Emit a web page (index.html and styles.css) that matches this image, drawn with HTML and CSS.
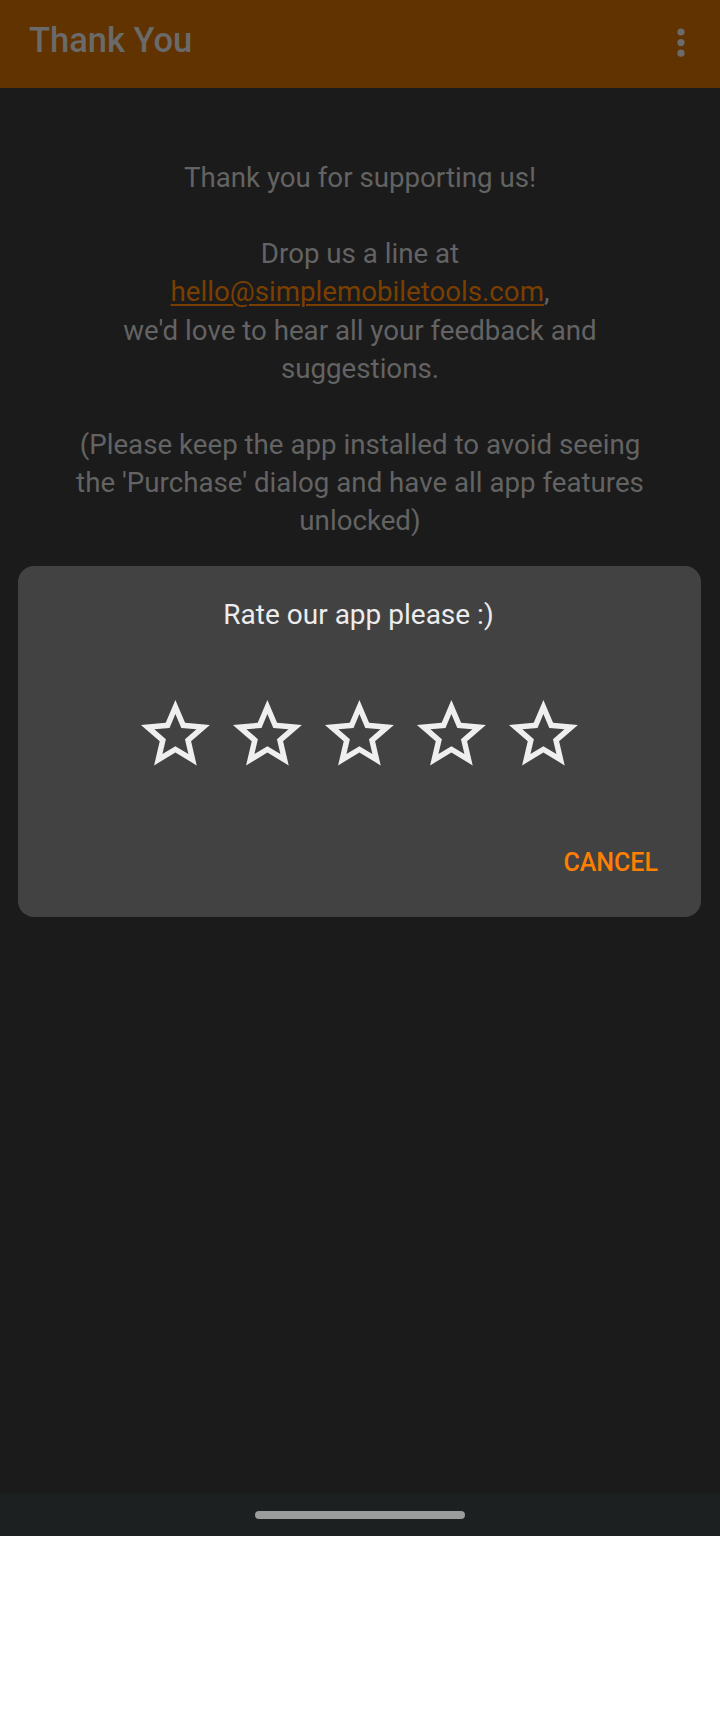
FILE: index.html
```html
<!DOCTYPE html>
<html lang="en">
<head>
<meta charset="utf-8">
<title>Thank You</title>
<link rel="stylesheet" href="styles.css">
</head>
<body>
<div class="screen">
  <header class="toolbar">
    <h1 class="toolbar-title">Thank You</h1>
    <span class="menu-btn" aria-label="More options">
      <svg width="8" height="30" viewBox="0 0 8 30"><circle cx="4" cy="4" r="3.6"/><circle cx="4" cy="14.6" r="3.6"/><circle cx="4" cy="25.2" r="3.6"/></svg>
    </span>
  </header>
  <main class="content">
    <p class="message">Thank you for supporting us!<br><br>Drop us a line at<br><a class="mail" href="#">hello@simplemobiletools.com</a>,<br>we'd love to hear all your feedback and<br>suggestions.<br><br>(Please keep the app installed to avoid seeing<br>the 'Purchase' dialog and have all app features<br>unlocked)</p>
    <div class="dialog">
      <div class="dialog-title">Rate our app please :)</div>
      <div class="stars">
        <svg class="star" viewBox="0 0 24 24"><path d="M22 9.24l-7.19-.62L12 2 9.19 8.630 2 9.24l5.46 4.73L5.82 21 12 17.27 18.18 21l-1.63-7.03L22 9.24zM12 15.4l-3.76 2.27 1-4.28-3.32-2.88 4.38-.38L12 6.1l1.71 4.04 4.38.38-3.32 2.88 1 4.28L12 15.4z"/></svg>
        <svg class="star" viewBox="0 0 24 24"><path d="M22 9.24l-7.19-.62L12 2 9.19 8.63 2 9.24l5.46 4.73L5.82 21 12 17.27 18.18 21l-1.63-7.03L22 9.24zM12 15.4l-3.76 2.27 1-4.28-3.32-2.88 4.38-.38L12 6.1l1.71 4.04 4.38.38-3.32 2.88 1 4.28L12 15.4z"/></svg>
        <svg class="star" viewBox="0 0 24 24"><path d="M22 9.24l-7.19-.62L12 2 9.19 8.63 2 9.24l5.46 4.73L5.82 21 12 17.27 18.18 21l-1.63-7.03L22 9.24zM12 15.4l-3.76 2.27 1-4.28-3.32-2.88 4.38-.38L12 6.1l1.71 4.04 4.38.38-3.32 2.88 1 4.28L12 15.4z"/></svg>
        <svg class="star" viewBox="0 0 24 24"><path d="M22 9.24l-7.19-.62L12 2 9.19 8.63 2 9.24l5.46 4.73L5.82 21 12 17.27 18.18 21l-1.63-7.03L22 9.24zM12 15.4l-3.76 2.27 1-4.28-3.32-2.88 4.38-.38L12 6.1l1.71 4.04 4.38.38-3.32 2.88 1 4.28L12 15.4z"/></svg>
        <svg class="star" viewBox="0 0 24 24"><path d="M22 9.24l-7.19-.62L12 2 9.19 8.63 2 9.24l5.46 4.73L5.82 21 12 17.27 18.18 21l-1.63-7.03L22 9.24zM12 15.4l-3.76 2.27 1-4.28-3.32-2.88 4.38-.38L12 6.1l1.71 4.04 4.38.38-3.32 2.88 1 4.28L12 15.4z"/></svg>
      </div>
      <div class="dialog-actions">
        <span class="btn-cancel">CANCEL</span>
      </div>
    </div>
  </main>
  <div class="navbar"><span class="nav-pill"></span></div>
</div>
</body>
</html>
```
FILE: styles.css
```css
html, body {
  margin: 0;
  padding: 0;
  background: #ffffff;
}
body {
  font-family: Roboto, "Liberation Sans", sans-serif;
}
.screen {
  width: 720px;
  display: flex;
  flex-direction: column;
}
.toolbar {
  height: 88px;
  box-sizing: border-box;
  background: #613300;
  display: flex;
  align-items: center;
  justify-content: space-between;
  padding: 0 35px 8px 29px;
}
.toolbar-title {
  margin: 0;
  font-size: 34.5px;
  font-weight: 500;
  color: #6a6a6a;
  line-height: normal;
}
.menu-btn {
  display: flex;
  padding-top: 6px;
}
.menu-btn svg {
  fill: #6b6b6b;
  display: block;
}
.content {
  position: relative;
  height: 1405px;
  background: #1b1b1b;
}
.message {
  margin: 0;
  padding-top: 71.2px;
  font-size: 27.7px;
  line-height: 38.1px;
  color: #636363;
  text-align: center;
  white-space: nowrap;
}
.mail {
  color: #7a3f00;
  text-decoration: underline;
  text-decoration-thickness: 1.5px;
  text-underline-offset: 3px;
}
.dialog {
  position: absolute;
  top: 478px;
  left: 18px;
  width: 683px;
  height: 351px;
  box-sizing: border-box;
  background: #424242;
  border-radius: 16px;
  display: flex;
  flex-direction: column;
  padding-top: 32px;
}
.dialog-title {
  text-align: center;
  font-size: 28px;
  color: #ececec;
  line-height: normal;
  padding-right: 2px;
}
.stars {
  display: flex;
  justify-content: center;
  gap: 9.2px;
  margin-top: 62px;
}
.star {
  width: 82.8px;
  height: 82.8px;
  fill: #efefef;
  display: block;
}
.dialog-actions {
  display: flex;
  justify-content: flex-end;
  margin-top: 72px;
  padding-right: 43px;
}
.btn-cancel {
  font-size: 25px;
  font-weight: 500;
  color: #ff7f00;
  line-height: normal;
}
.navbar {
  height: 43px;
  background: #1c2021;
  display: flex;
  align-items: center;
  justify-content: center;
}
.nav-pill {
  width: 210px;
  height: 8px;
  border-radius: 4px;
  background: #9a9c9b;
  margin-top: 1px;
}
```
